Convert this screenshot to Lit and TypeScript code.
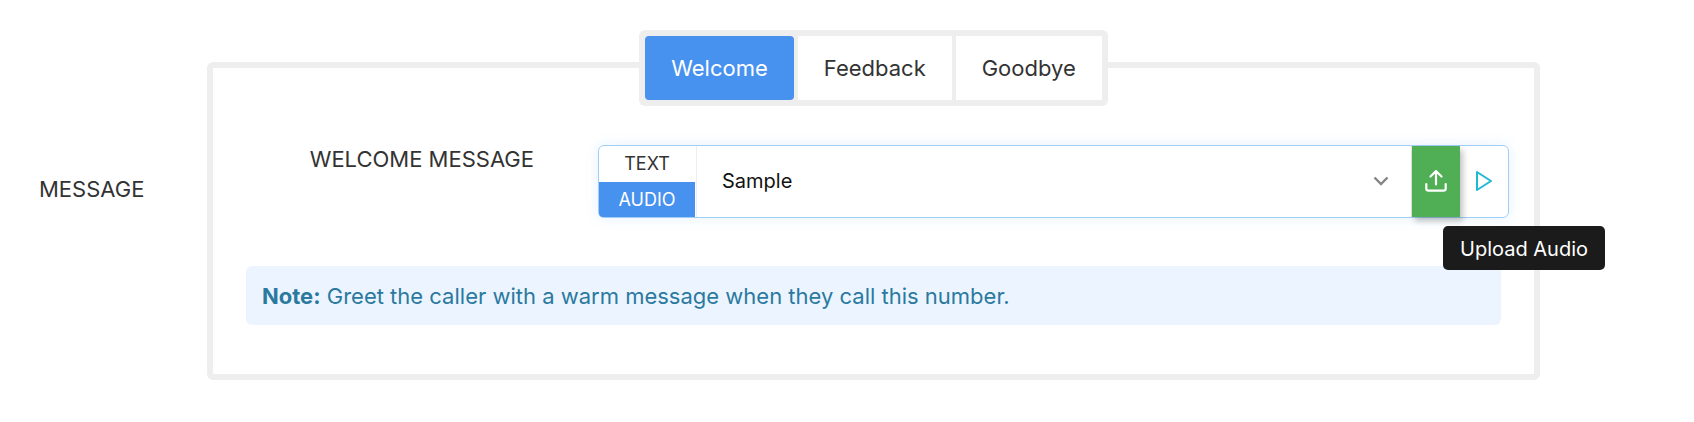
import { LitElement, html, css } from "lit";
import { customElement, state } from "lit/decorators.js";

type Tab = "Welcome" | "Feedback" | "Goodbye";
type Mode = "TEXT" | "AUDIO";

@customElement("app-root")
export class AppRoot extends LitElement {
  static styles = css`
    :host {
      display: block;
      font-family: Inter, "Liberation Sans", sans-serif;
      font-size: 22px;
      line-height: 28px;
      color: #333;
    }
    * {
      box-sizing: border-box;
    }
    button,
    select {
      font: inherit;
      color: inherit;
      margin: 0;
      padding: 0;
      border: 0;
      background: none;
      cursor: pointer;
    }
    .page {
      display: grid;
      grid-template-columns: 168px minmax(0, 1fr);
      align-items: start;
      padding: 62px 154px 42px 39px;
      background: #fff;
    }
    .section-label {
      margin: 0;
      padding-top: 113px;
      font: inherit;
    }
    .panel {
      border: 6px solid #eee;
      border-radius: 6px;
      padding-bottom: 49px;
    }
    .tabs {
      display: flex;
      width: max-content;
      gap: 4px;
      margin: -38px auto 39px;
      padding: 6px;
      border-radius: 6px;
      background: #eee;
    }
    .tab {
      height: 64px;
      padding: 0 26px;
      background: #fff;
    }
    .tab.active {
      border-radius: 4px;
      background: #4791ef;
      color: #fff;
    }
    .field {
      display: grid;
      grid-template-columns: 321px minmax(0, 1fr);
      gap: 64px;
      align-items: start;
      padding-right: 25px;
    }
    .field-label {
      text-align: right;
    }
    .control {
      display: flex;
      height: 73px;
      border: 1px solid #9fcff5;
      border-radius: 6px;
      box-shadow: 0 0 14px rgba(71, 160, 240, 0.14);
    }
    .modes {
      display: grid;
      grid-template-rows: 1fr 1fr;
      gap: 1px;
      width: 98px;
      padding-right: 1px;
      border-right: 1px solid #eee;
      font-size: 18px;
    }
    .mode.active {
      background: #4791ef;
      color: #fff;
      border-bottom-left-radius: 4px;
    }
    .picker {
      position: relative;
      display: flex;
      flex: 1;
      border-right: 1px solid #e4e4e4;
    }
    .select {
      flex: 1;
      appearance: none;
      padding: 0 48px 2px 25px;
      color: #111;
      font-size: 20px;
      outline: none;
    }
    .chevron {
      position: absolute;
      right: 20px;
      top: 25px;
      pointer-events: none;
    }
    .upload-wrap {
      position: relative;
      display: flex;
    }
    .icon-button {
      display: grid;
      place-items: center;
      width: 48px;
      padding-bottom: 2px;
    }
    .upload {
      background: #50ae55;
      box-shadow: 3px 4px 6px rgba(0, 0, 0, 0.24);
    }
    .tooltip {
      position: absolute;
      z-index: 1;
      top: 80px;
      left: 31px;
      padding: 9px 17px 7px;
      border-radius: 5px;
      background: #1b1b1b;
      color: #fff;
      font-size: 20px;
      white-space: nowrap;
    }
    .note {
      margin: 48px 33px 0;
      padding: 17px 16px 15px;
      border-radius: 6px;
      background: #ecf5ff;
      color: #2b799f;
      line-height: 27px;
    }
  `;

  @state() private tab: Tab = "Welcome";
  @state() private mode: Mode = "AUDIO";

  render() {
    return html`
      <main class="page">
        <h2 class="section-label" id="section">MESSAGE</h2>
        <section class="panel" aria-labelledby="section">
          <div class="tabs" role="tablist">
            ${(["Welcome", "Feedback", "Goodbye"] as Tab[]).map(
              (name) => html`<button
                class="tab ${this.tab === name ? "active" : ""}"
                role="tab"
                aria-selected=${this.tab === name}
                @click=${() => (this.tab = name)}
              >${name}</button>`
            )}
          </div>
          <div class="field">
            <label class="field-label" for="audio">WELCOME MESSAGE</label>
            <div class="control">
              <div class="modes" role="group" aria-label="Message type">
                ${(["TEXT", "AUDIO"] as Mode[]).map(
                  (name) => html`<button
                    class="mode ${this.mode === name ? "active" : ""}"
                    aria-pressed=${this.mode === name}
                    @click=${() => (this.mode = name)}
                  >${name}</button>`
                )}
              </div>
              <div class="picker">
                <select class="select" id="audio">
                  <option>Sample</option>
                </select>
                <svg class="chevron" width="20" height="20" viewBox="0 0 20 20" fill="none" stroke="#858585" stroke-width="2.4" aria-hidden="true">
                  <path d="M3.500 6.500 10 13l6.500-6.500" />
                </svg>
              </div>
              <div class="upload-wrap">
                <button class="icon-button upload" aria-labelledby="tip">
                  <svg width="24" height="24" viewBox="0 0 24 24" fill="none" stroke="#fff" stroke-width="2.2" stroke-linecap="round" stroke-linejoin="round" aria-hidden="true">
                    <path d="M12 15.500V2.500M6.500 7.500 12 2l5.500 5.500M2.300 15v4.500a2.200 2.200 0 0 0 2.200 2.200h15a2.200 2.200 0 0 0 2.200-2.200V15" />
                  </svg>
                </button>
                <span class="tooltip" id="tip" role="tooltip">Upload Audio</span>
              </div>
              <button class="icon-button" aria-label="Play">
                <svg width="24" height="24" viewBox="0 0 24 24" fill="none" stroke="#20b9d4" stroke-width="2" stroke-linejoin="round" aria-hidden="true">
                  <path d="M5 3v18L19 12z" />
                </svg>
              </button>
            </div>
          </div>
          <p class="note"><strong>Note:</strong> Greet the caller with a warm message when they call this number.</p>
        </section>
      </main>
    `;
  }
}
